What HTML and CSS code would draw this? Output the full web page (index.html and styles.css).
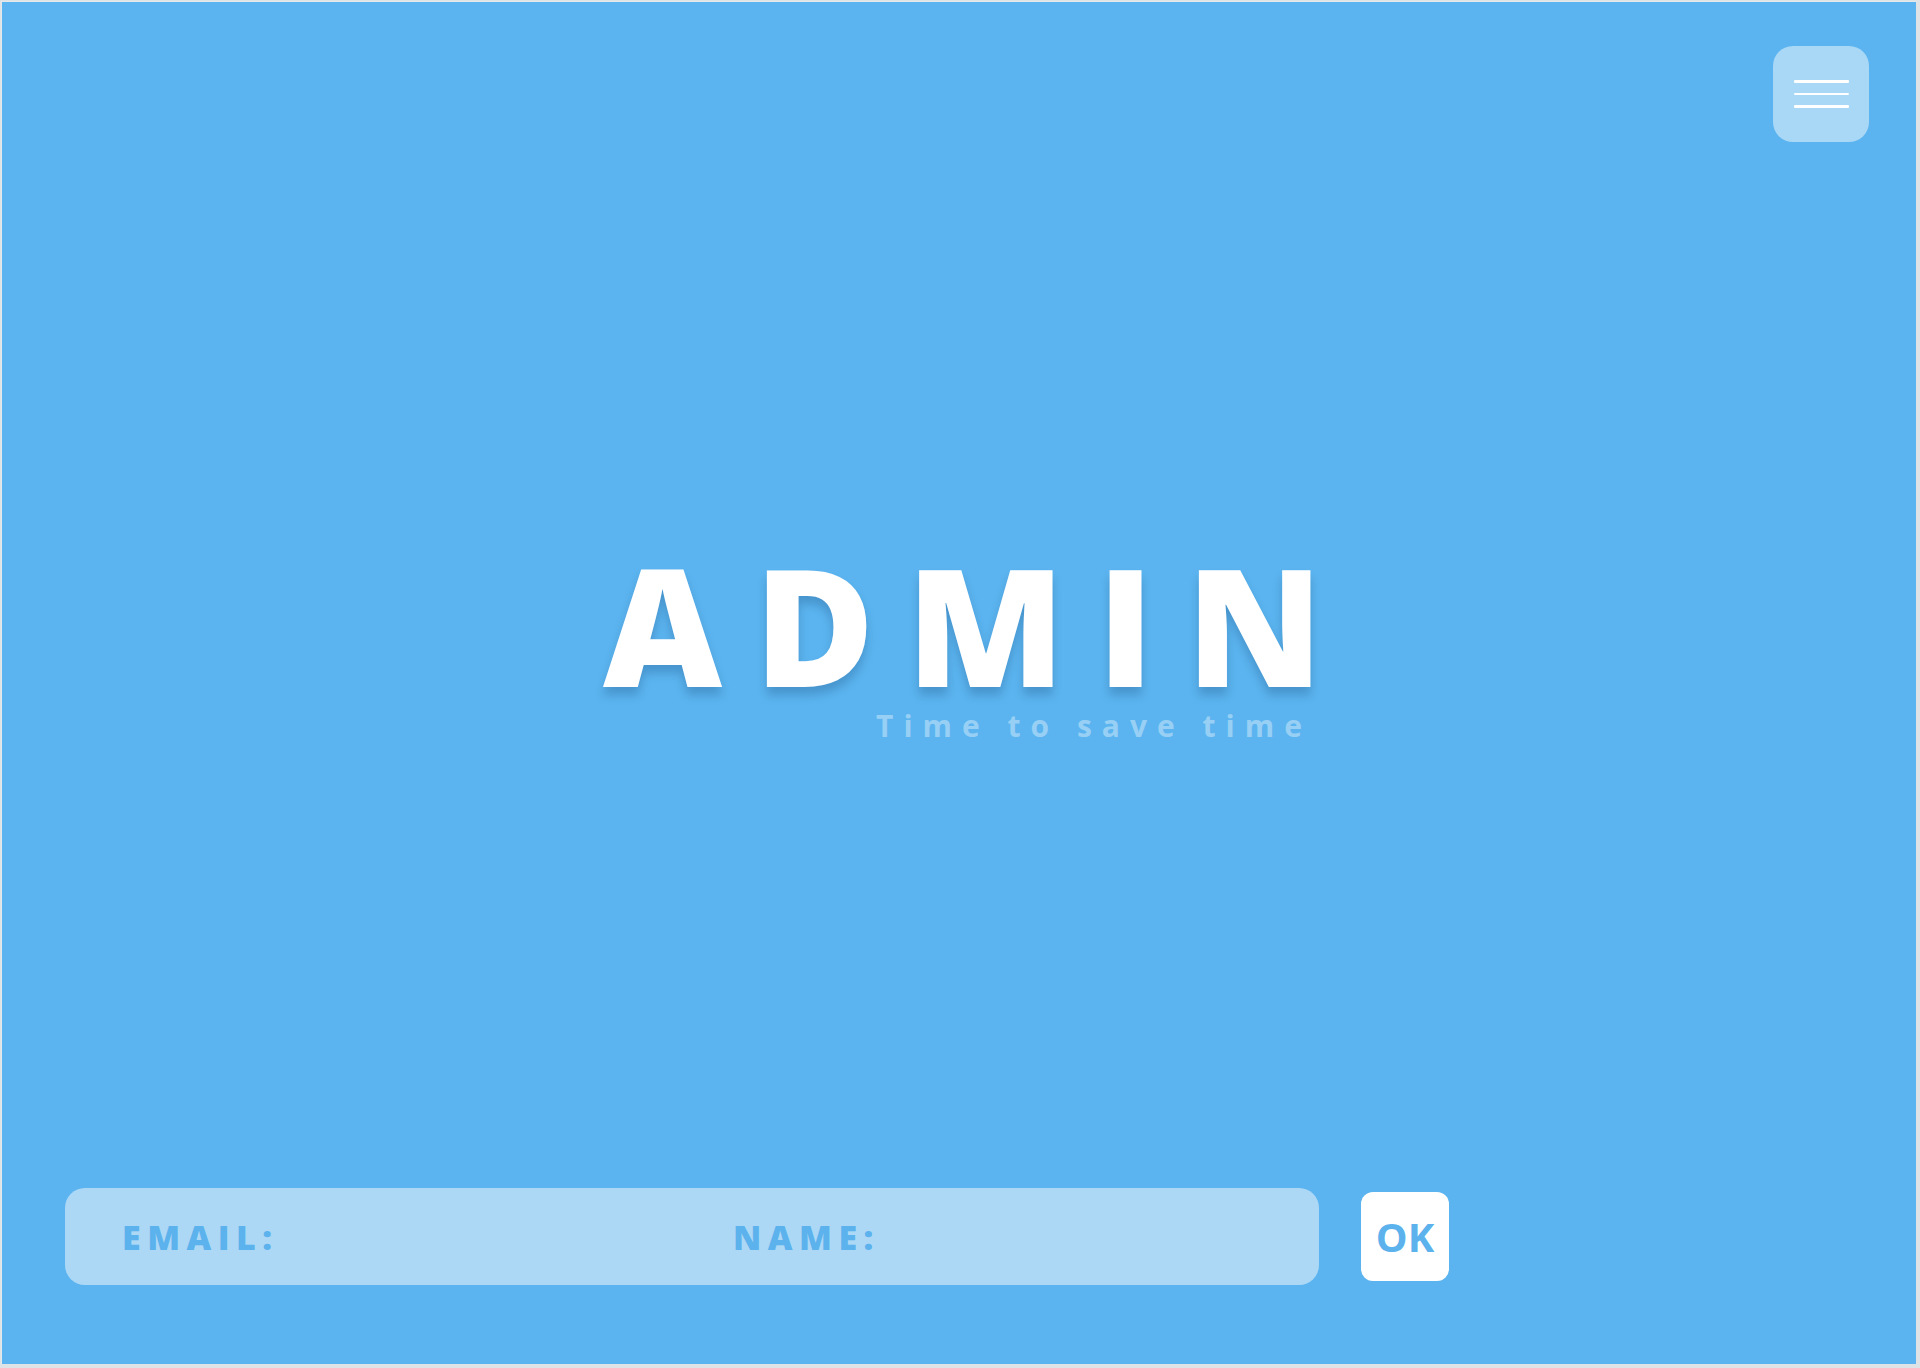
FILE: index.html
```html
<!DOCTYPE html>
<html lang="en">
<head>
<meta charset="utf-8">
<title>Admin</title>
<link rel="stylesheet" href="styles.css">
</head>
<body>
<div class="app">
  <header class="topbar">
    <button class="menu-btn" type="button" aria-label="Menu">
      <span class="menu-line"></span>
      <span class="menu-line"></span>
      <span class="menu-line"></span>
    </button>
  </header>
  <main class="hero">
    <div class="hero-block">
      <h1 class="title">ADMIN</h1>
      <p class="subtitle">Time to save time</p>
    </div>
  </main>
  <footer class="form-row">
    <div class="field-bar">
      <div class="field field-email"><span class="field-label">EMAIL:</span></div>
      <div class="field field-name"><span class="field-label">NAME:</span></div>
    </div>
    <button class="ok-btn" type="button">OK</button>
  </footer>
</div>
</body>
</html>
```

FILE: styles.css
```css
html, body {
  margin: 0;
  padding: 0;
  height: 100%;
}
body {
  background: #dfe3e6;
  font-family: "Open Sans", "Noto Sans", sans-serif;
}
.app {
  box-sizing: border-box;
  margin: 1px 4px 0 1px;
  height: 1363px;
  background: #5bb4ef;
  display: flex;
  flex-direction: column;
  border-left: 1px solid #e4e8ea;
  border-top: 1px solid #e4e8ea;
}
.topbar {
  display: flex;
  justify-content: flex-end;
  padding: 44px 47px 0 0;
}
.menu-btn {
  width: 96px;
  height: 96px;
  border: none;
  border-radius: 20px;
  background: #a9d7f6;
  display: flex;
  flex-direction: column;
  align-items: center;
  justify-content: center;
  gap: 10px;
  padding: 0;
  cursor: pointer;
}
.menu-line {
  display: block;
  width: 55px;
  height: 2.5px;
  background: #ffffff;
  border-radius: 1px;
}
.hero {
  flex: 1;
  display: flex;
  justify-content: center;
  align-items: flex-start;
  padding: 412px 0 0 8px;
}
.hero-block {
  display: flex;
  flex-direction: column;
  align-items: flex-end;
}
.title {
  margin: 0 -32px 0 0;
  font-size: 164px;
  font-weight: 800;
  line-height: 0.85;
  letter-spacing: 32px;
  color: #ffffff;
  text-shadow: 0 8px 10px rgba(20, 70, 120, 0.28);
}
.subtitle {
  margin: 18px 11px 0 0;
  font-size: 30px;
  font-weight: 700;
  line-height: 1;
  letter-spacing: 10px;
  color: rgba(255, 255, 255, 0.38);
}
.form-row {
  display: flex;
  align-items: center;
  gap: 42px;
  padding: 0 0 79px 63px;
}
.field-bar {
  box-sizing: border-box;
  width: 1254px;
  height: 97px;
  border-radius: 20px;
  background: #acd8f6;
  display: flex;
  align-items: center;
  padding-left: 57px;
}
.field {
  display: flex;
  align-items: center;
}
.field-email {
  width: 611px;
}
.field-label {
  font-size: 34px;
  font-weight: 800;
  letter-spacing: 6.5px;
  color: #5cb2ec;
  line-height: 1;
}
.ok-btn {
  width: 88px;
  height: 89px;
  border: none;
  border-radius: 12px;
  background: #ffffff;
  color: #5cb2ec;
  font-family: "Open Sans", "Noto Sans", sans-serif;
  font-size: 40px;
  font-weight: 700;
  padding: 0;
  cursor: pointer;
  display: flex;
  align-items: center;
  justify-content: center;
}
```
